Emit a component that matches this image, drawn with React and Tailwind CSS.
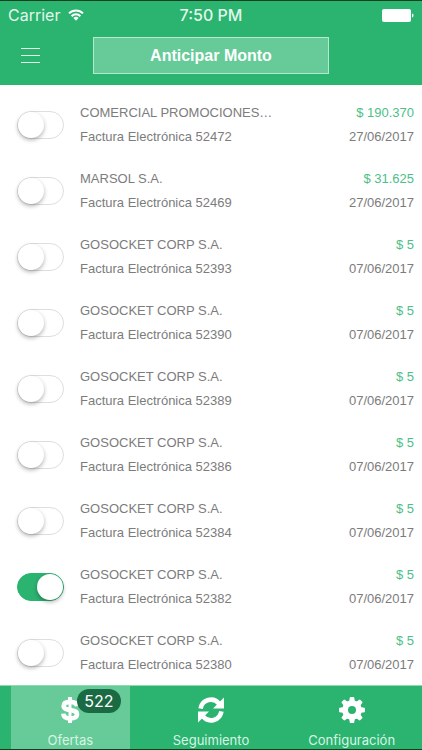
import { useState } from "react";

const offers = [
  { name: "COMERCIAL PROMOCIONES…", id: 52472, amount: "190.370", date: "27/06/2017" },
  { name: "MARSOL S.A.", id: 52469, amount: "31.625", date: "27/06/2017" },
  { name: "GOSOCKET CORP S.A.", id: 52393, amount: "5", date: "07/06/2017" },
  { name: "GOSOCKET CORP S.A.", id: 52390, amount: "5", date: "07/06/2017" },
  { name: "GOSOCKET CORP S.A.", id: 52389, amount: "5", date: "07/06/2017" },
  { name: "GOSOCKET CORP S.A.", id: 52386, amount: "5", date: "07/06/2017" },
  { name: "GOSOCKET CORP S.A.", id: 52384, amount: "5", date: "07/06/2017" },
  { name: "GOSOCKET CORP S.A.", id: 52382, amount: "5", date: "07/06/2017" },
  { name: "GOSOCKET CORP S.A.", id: 52380, amount: "5", date: "07/06/2017" },
];

function DollarIcon() {
  return (
    <svg viewBox="0 0 26 26" className="size-[26px]" fill="none" stroke="currentColor" aria-hidden="true">
      <path d="M13 0v5M13 21v5" strokeWidth="4" />
      <path
        d="M20 9.300C19.600 6.300 16.700 4.900 13.200 4.900c-3.900 0-6.500 1.500-6.500 4.100 0 2.900 3 3.400 6.500 4s6.800 1.200 6.800 4.200c0 2.700-2.800 4.200-6.800 4.200-4 0-6.700-1.500-6.900-4.800"
        strokeWidth="4.600"
      />
      <path d="M13 5v16" strokeWidth="3" />
    </svg>
  );
}

function RefreshIcon() {
  return (
    <svg viewBox="0 0 26 26" className="size-[26px]" fill="none" stroke="currentColor" aria-hidden="true">
      <path d="M2.600 11.600a10.400 10.400 0 0 1 18.400-5" strokeWidth="4.600" />
      <path d="M26 .5v11H15Z" fill="currentColor" stroke="none" />
      <path d="M23.400 14.400a10.400 10.400 0 0 1-18.400 5" strokeWidth="4.600" />
      <path d="M0 25.500v-11h11Z" fill="currentColor" stroke="none" />
    </svg>
  );
}

function GearIcon() {
  return (
    <svg viewBox="0 0 26 26" className="size-[26px]" fill="none" stroke="currentColor" aria-hidden="true">
      <circle cx="13" cy="13" r="6.900" strokeWidth="5.800" />
      {[0, 45, 90, 135, 180, 225, 270, 315].map((angle) => (
        <path
          key={angle}
          d="M10 5 10.800.6Q10.900 0 11.500 0h3q.6 0 .7.6L16 5Z"
          fill="currentColor"
          stroke="none"
          transform={`rotate(${angle} 13 13)`}
        />
      ))}
    </svg>
  );
}

function StatusBar() {
  return (
    <div className="grid grid-cols-3 items-center border-t border-[#12401f] px-2 pt-1 font-['Inter',sans-serif] text-base leading-5 text-[#e2f8ea]">
      <div className="flex items-center gap-2">
        <span>Carrier</span>
        <svg viewBox="0 0 16 12" className="h-3 w-4" fill="none" stroke="#fff" strokeWidth="2">
          <path d="M1 4.400a10 10 0 0 1 14 0M3.600 7.200a6.200 6.200 0 0 1 8.800 0" />
          <path d="M8 11.800 5.400 9.100a3.700 3.700 0 0 1 5.200 0Z" fill="#fff" stroke="none" />
        </svg>
      </div>
      <span className="text-center font-medium">7:50 PM</span>
      <svg viewBox="0 0 32 13" className="h-[13px] w-8 justify-self-end" fill="#fff">
        <rect width="29" height="13" rx="2" />
        <path d="M30 4.500c2 .6 2 3.400 0 4Z" />
      </svg>
    </div>
  );
}

function OfferRow({ offer, checked, onToggle }) {
  return (
    <li className="flex h-[66px] items-center gap-4 pt-0.5 pr-2 pl-[17px]">
      <input
        type="checkbox"
        role="switch"
        checked={checked}
        onChange={onToggle}
        aria-label={`${offer.name} ${offer.id}`}
        className="h-7 w-[47px] shrink-0 cursor-pointer appearance-none rounded-full border border-[#dedede] bg-white before:block before:size-[26px] before:rounded-full before:bg-white before:shadow-[0_2px_4px_rgba(0,0,0,0.3)] checked:border-[#2bb370] checked:bg-[#2bb370] checked:before:translate-x-[19px]"
      />
      <div className="min-w-0 flex-1 text-[#7c7c7c]">
        <p className="truncate">{offer.name}</p>
        <p>Factura Electrónica {offer.id}</p>
      </div>
      <div className="text-right text-[#7c7c7c]">
        <p className="text-[#4cc088]">$ {offer.amount}</p>
        <p>{offer.date}</p>
      </div>
    </li>
  );
}

function Tab({ icon, label, badge, active }) {
  return (
    <a
      href="#"
      className={`mx-[11px] flex flex-1 flex-col items-center justify-between pt-[11px] pb-px text-[#d8f5e4] ${active ? "bg-[#66cb98]" : ""}`}
    >
      <span className="relative text-white">
        {icon}
        {badge && (
          <span className="absolute -top-2 left-5 rounded-full bg-[#1a6b43] px-[7px] font-['Inter',sans-serif] text-base leading-6">
            {badge}
          </span>
        )}
      </span>
      <span className="font-['Inter',sans-serif] text-[13px] leading-4">{label}</span>
    </a>
  );
}

export default function App() {
  const [selected, setSelected] = useState([52382]);
  const toggle = (id) =>
    setSelected((ids) => (ids.includes(id) ? ids.filter((i) => i !== id) : [...ids, id]));

  return (
    <div className="flex min-h-screen flex-col bg-white font-['Liberation_Sans',sans-serif] text-[13px] leading-6">
      <header className="bg-[#2bb370] pb-[11px]">
        <StatusBar />
        <div className="grid grid-cols-[1fr_56%_1fr] items-center pt-3">
          <button type="button" aria-label="Menú" className="ml-[21px] flex w-[19px] flex-col gap-1.5">
            <span className="h-px w-full bg-[#e2f8ea]" />
            <span className="h-px w-full bg-[#e2f8ea]" />
            <span className="h-px w-full bg-[#e2f8ea]" />
          </button>
          <button
            type="button"
            className="h-[37px] border border-[#b5e8cc] bg-[#66cb98] text-base font-bold text-white"
          >
            Anticipar Monto
          </button>
        </div>
      </header>
      <main className="flex-1 pt-[6px]">
        <ul>
          {offers.map((offer) => (
            <OfferRow
              key={offer.id}
              offer={offer}
              checked={selected.includes(offer.id)}
              onToggle={() => toggle(offer.id)}
            />
          ))}
        </ul>
      </main>
      <nav className="flex h-[65px] border-t border-b border-t-[#8fd9b3] border-b-[#12401f] bg-[#2bb370]">
        <Tab icon={<DollarIcon />} label="Ofertas" badge="522" active />
        <Tab icon={<RefreshIcon />} label="Seguimiento" />
        <Tab icon={<GearIcon />} label="Configuración" />
      </nav>
    </div>
  );
}
